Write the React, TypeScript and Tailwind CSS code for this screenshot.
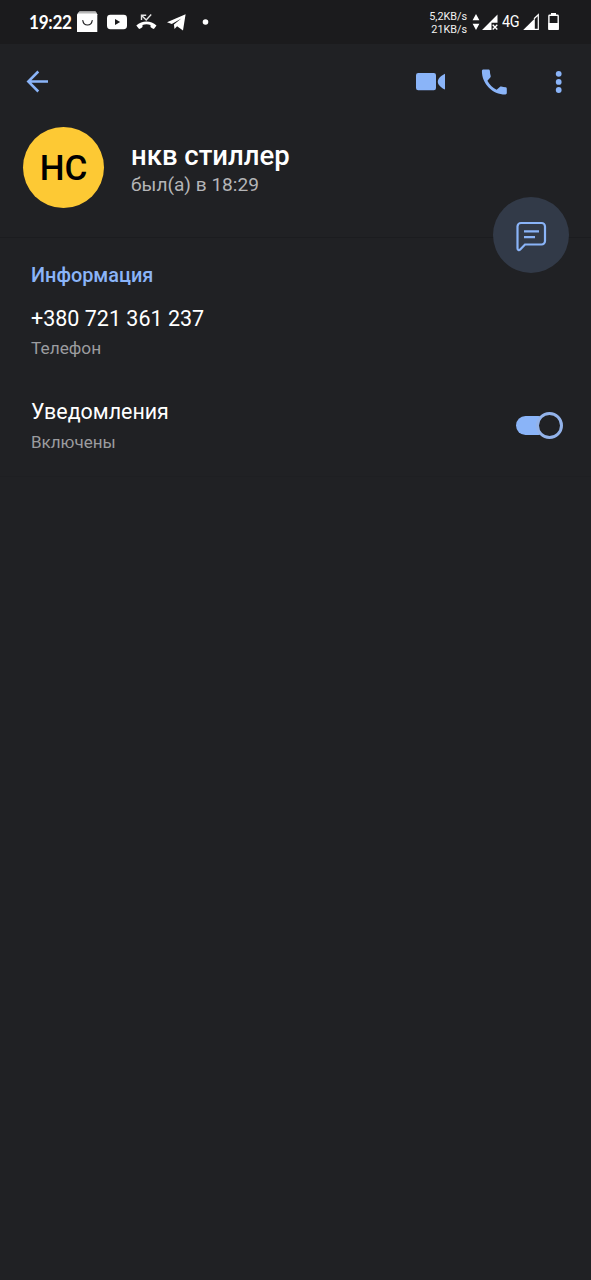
import React from "react";

function StatusBar() {
  return (
    <header className="flex h-11 items-start bg-[#1b1b1d] text-white">
      <span className="ml-[29px] mt-[11px] w-[47px] whitespace-nowrap font-['Lato','Roboto',sans-serif] text-[18px] font-bold leading-[22px] tracking-[-0.3px]">
        <span className="inline-block origin-left scale-x-[0.95]">19:22</span>
      </span>
      <svg className="h-11 w-[140px]" viewBox="76 0 140 44" fill="#fff">
        <path d="M79.5 11.5h16l1.8 2.8V32H77V14.3z" />
        <path d="M77.8 13.5l1.7-2h16l1.7 2z" fill="#b8b8b8" />
        <path d="M82.8 20.5c.8 6 8.6 6 9.400 0" fill="none" stroke="#1b1b1d" strokeWidth="1.200" strokeLinecap="round" />
        <rect x="107" y="14.800" width="20" height="14.400" rx="3.400" />
        <path d="M115 19l5.200 3-5.200 3z" fill="#1b1b1d" />
        <path d="M136.300 25.500c5.800-5.400 14.600-5.400 20.200 0l-2.600 3.400c-1.200-.5-2.500-1.100-3.400-2v-2c-2.600-.8-5.400-.8-8 0v2c-.9.900-2.200 1.500-3.400 2z" />
        <path d="M141.500 20v-4.800h4.700M141.700 15.400l4.500 4.500 5-5.300" fill="none" stroke="#e4e4e4" strokeWidth="1.400" />
        <path d="M167 22.200L185.600 14.300 183 30.400l-5.900-4.200-2.600 2.800-.6-4.500 7.400-6-9.500 5.500z" />
        <circle cx="205.500" cy="22" r="2.800" />
      </svg>
      <div className="ml-auto mr-[4px] mt-[11px] w-[48px] whitespace-nowrap text-right text-[10.800px] leading-[12.500px] text-[#f2f2f2]">
        <div>5,2KB/s</div>
        <div>21KB/s</div>
      </div>
      <svg className="h-11 w-[31px]" viewBox="471 0 31 44" fill="#fff">
        <path d="M476 14l3.400 6.200h-6.800zM476 30l3.400-6.200h-6.800z" />
        <path d="M482 30l15.500-15.500v8.300h-6V30z" />
        <path d="M492.700 24.800l4.600 4.700M497.300 24.800l-4.600 4.700" stroke="#fff" strokeWidth="1.400" />
      </svg>
      <span className="mt-[11px] w-[21px] whitespace-nowrap text-[16px] leading-[22px] tracking-[-0.5px]">
        <span className="inline-block origin-left scale-x-[0.9]">4G</span>
      </span>
      <svg className="mr-[29px] h-11 w-[39px]" viewBox="523 0 39 44" fill="#fff">
        <path d="M523.200 30l11.600-11.600V30z" />
        <path d="M534 18.800l4.300-4.100v14.700H534" fill="none" stroke="#fff" strokeWidth="1.200" />
        <path d="M551 13h5v2.300h-5z" />
        <rect x="548.900" y="15.200" width="9.300" height="14" rx=".7" fill="none" stroke="#fff" strokeWidth="1.400" />
        <path d="M548.400 23h10.300v7h-10.300z" />
      </svg>
    </header>
  );
}

function Toolbar() {
  return (
    <nav className="flex h-[76px] items-start justify-between text-[#8ab4f8]">
      <button aria-label="Назад" className="h-[76px]">
        <svg className="h-[76px] w-[60px]" viewBox="0 44 60 76" fill="none" stroke="currentColor" strokeWidth="2.500">
          <path d="M48 81.500H28M38.300 71.500l-10 10 10 10" />
        </svg>
      </button>
      <svg className="h-[76px] w-[181px]" viewBox="410 44 181 76" fill="currentColor">
        <rect x="416" y="73" width="20" height="17.200" rx="2.200" />
        <path d="M445 73.800v15.800c-3.400-1.500-7.200-4.600-7.200-7.900s3.800-6.400 7.200-7.900z" />
        <path d="M483.400 69.500h5c.9 0 1.500.6 1.500 1.500 0 1.700.3 3.400.8 5 .2.500 0 1.100-.4 1.500l-2.900 3.200c2.100 4.100 5.100 7 9.200 9.100l3.200-2.900c.4-.4 1-.5 1.500-.4 1.600.5 2.800.7 4.300.7.800 0 1.200.7 1.200 1.500v4.400c0 .8-.6 1.400-1.400 1.400-13.100 0-23.500-10.900-23.500-23.600 0-.8.700-1.400 1.500-1.400z" />
        <circle cx="558.700" cy="73.800" r="2.900" />
        <circle cx="558.700" cy="81.900" r="2.900" />
        <circle cx="558.700" cy="90" r="2.900" />
      </svg>
    </nav>
  );
}

export default function App() {
  return (
    <main className="flex min-h-screen w-full flex-col bg-[#202124] font-['Roboto',sans-serif] text-white">
      <StatusBar />
      <Toolbar />
      <section className="relative flex h-[118px] items-start border-b border-[#1b1c1f] pl-[23px] pt-[7px]">
        <div className="flex size-[81px] shrink-0 items-center justify-center rounded-full bg-[#fdc934] pt-[2px] text-[35px] font-medium leading-none text-black">
          НС
        </div>
        <div className="ml-[27px] mt-[13px] whitespace-nowrap">
          <h1 className="text-[27.500px] font-medium leading-[32px]">нкв стиллер</h1>
          <p className="text-[19.100px] leading-[26px] text-[#b4b5b7]">был(а) в 18:29</p>
        </div>
        <button aria-label="Написать" className="absolute right-[22px] top-[77px] size-[76px] rounded-full bg-[#323a48] text-[#8ab4f8]">
          <svg className="size-[76px]" viewBox="493 197 76 76" fill="none" stroke="currentColor" strokeWidth="2.200">
            <path d="M521 223h20.500a3.500 3.500 0 0 1 3.500 3.500V241a3.500 3.500 0 0 1-3.500 3.500H525l-4.800 5c-1.200 1.200-2.700.5-2.700-1.200v-21.800A3.500 3.500 0 0 1 521 223z" />
            <path d="M524 231.300h15M524 237.200h11" />
          </svg>
        </button>
      </section>
      <section className="h-[239px] whitespace-nowrap border-b border-[#1e1f22] pl-[31px] pt-[25px]">
        <h2 className="text-[19.900px] font-medium leading-[26px] text-[#8ab4f8]">Информация</h2>
        <p className="mt-[16px] text-[21.500px] leading-[28px]">+380 721 361 237</p>
        <p className="mt-[3px] text-[17.300px] leading-[24px] text-[#9b9c9f]">Телефон</p>
        <div className="mt-[38px] flex items-start justify-between pr-[28px]">
          <div>
            <p className="text-[21.400px] leading-[28px]">Уведомления</p>
            <p className="mt-[4px] text-[17px] leading-[24px] text-[#9b9c9f]">Включены</p>
          </div>
          <button role="switch" aria-checked="true" aria-label="Уведомления" className="mt-[14px] flex h-[27px] w-[47px] items-center">
            <span className="h-[19px] w-[32px] rounded-full bg-[#8ab4f8]" />
            <span className="-ml-[12px] size-[27px] shrink-0 rounded-full border-[3px] border-solid border-[#93b3ea] bg-[#202124]" />
          </button>
        </div>
      </section>
    </main>
  );
}
